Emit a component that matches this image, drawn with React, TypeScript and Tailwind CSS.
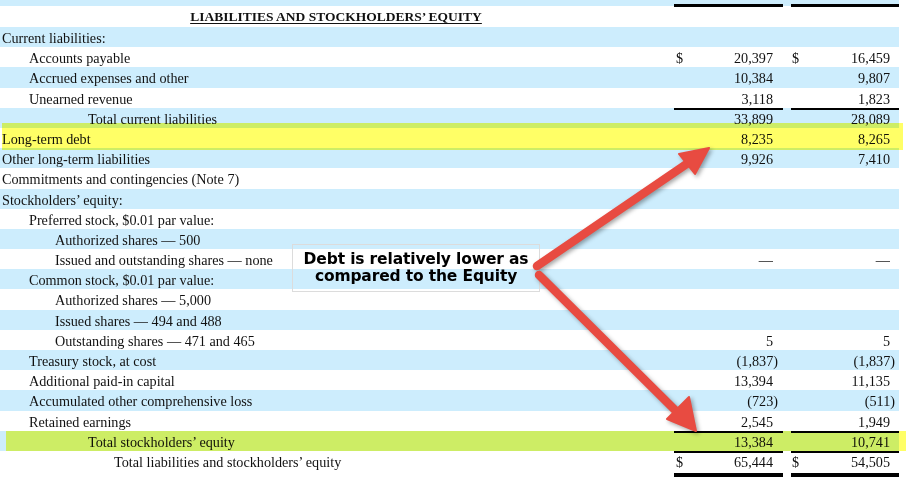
import React from 'react';

type Row = {
  label: string;
  indent: number;
  v1?: string;
  v2?: string;
  dollar?: boolean;
  blue?: boolean;
  lineTop?: boolean;
};

const rows: Row[] = [
  { label: 'Current liabilities:', indent: 2, blue: true },
  { label: 'Accounts payable', indent: 29, v1: '20,397', v2: '16,459', dollar: true },
  { label: 'Accrued expenses and other', indent: 29, v1: '10,384', v2: '9,807', blue: true },
  { label: 'Unearned revenue', indent: 29, v1: '3,118', v2: '1,823' },
  { label: 'Total current liabilities', indent: 88, v1: '33,899', v2: '28,089', blue: true, lineTop: true },
  { label: 'Long-term debt', indent: 2, v1: '8,235', v2: '8,265' },
  { label: 'Other long-term liabilities', indent: 2, v1: '9,926', v2: '7,410', blue: true },
  { label: 'Commitments and contingencies (Note 7)', indent: 2 },
  { label: 'Stockholders’ equity:', indent: 2, blue: true },
  { label: 'Preferred stock, $0.01 par value:', indent: 29 },
  { label: 'Authorized shares — 500', indent: 55, blue: true },
  { label: 'Issued and outstanding shares — none', indent: 55, v1: '—', v2: '—' },
  { label: 'Common stock, $0.01 par value:', indent: 29, blue: true },
  { label: 'Authorized shares — 5,000', indent: 55 },
  { label: 'Issued shares — 494 and 488', indent: 55, blue: true },
  { label: 'Outstanding shares — 471 and 465', indent: 55, v1: '5', v2: '5' },
  { label: 'Treasury stock, at cost', indent: 29, v1: '(1,837)', v2: '(1,837)', blue: true },
  { label: 'Additional paid-in capital', indent: 29, v1: '13,394', v2: '11,135' },
  { label: 'Accumulated other comprehensive loss', indent: 29, v1: '(723)', v2: '(511)', blue: true },
  { label: 'Retained earnings', indent: 29, v1: '2,545', v2: '1,949' },
  { label: 'Total stockholders’ equity', indent: 88, v1: '13,384', v2: '10,741', blue: true, lineTop: true },
  { label: 'Total liabilities and stockholders’ equity', indent: 114, v1: '65,444', v2: '54,505', dollar: true, lineTop: true },
];

function Num({ v }: { v?: string }) {
  if (!v) return null;
  if (v.endsWith(')')) {
    return (
      <span>
        {v.slice(0, -1)}
        <span className="mr-[-5px]">)</span>
      </span>
    );
  }
  return <span>{v}</span>;
}

function TableRow({ r }: { r: Row }) {
  // rules drawn as inset shadows so the numbers stay on the same baseline
  const line = r.lineTop ? 'shadow-[inset_0_2px_0_#000]' : '';
  return (
    <div className={`flex h-[20.2px] leading-[22px] ${r.blue ? 'bg-[#cdedfd]' : 'bg-white'}`}>
      <div className="w-[674px] whitespace-nowrap" style={{ paddingLeft: r.indent }}>
        {r.label}
      </div>
      <div className={`w-[109px] flex justify-between pl-[2px] pr-[10px] ${line}`}>
        <span>{r.dollar ? '$' : ''}</span>
        <Num v={r.v1} />
      </div>
      <div className="w-[8px]" />
      <div className={`w-[108px] flex justify-between pl-[1px] pr-[9px] ${line}`}>
        <span>{r.dollar ? '$' : ''}</span>
        <Num v={r.v2} />
      </div>
    </div>
  );
}

export default function App() {
  return (
    <div className="relative w-[915px] h-[482px] overflow-hidden bg-white text-[#111] text-[14.2px] font-['Liberation_Serif',serif]">
      <div className="w-[899px]">
        {/* top strip with column rules */}
        <div className="h-[4px] bg-[#cdedfd]" />
        <div className="flex h-[23px]">
          <div className="w-[674px] border-t-2 border-[#cdedfd] text-center">
            <span className="ml-[-2px] font-bold text-[13.5px] underline underline-offset-2 leading-[20px]">
              LIABILITIES AND STOCKHOLDERS’ EQUITY
            </span>
          </div>
          <div className="w-[109px] border-t-[3px] border-black" />
          <div className="w-[8px] border-t-2 border-[#cdedfd]" />
          <div className="w-[108px] border-t-[3px] border-black" />
        </div>

        {rows.map((r, i) => (
          <TableRow key={i} r={r} />
        ))}

        <div className="flex h-[6px]">
          <div className="w-[674px]" />
          <div className="w-[109px] border-b-[4px] border-black" />
          <div className="w-[8px]" />
          <div className="w-[108px] border-b-[4px] border-black" />
        </div>
      </div>

      {/* highlighter marks */}
      <div className="absolute left-[2px] top-[123px] w-[901px] h-[26.5px] bg-[#ffff66] mix-blend-multiply" />
      <div className="absolute left-[6px] top-[431px] w-[900px] h-[19.5px] bg-[#ffff66] mix-blend-multiply" />

      {/* callout */}
      <div className="absolute left-[292px] top-[244px] w-[248px] h-[48px] border border-[#dcdcdc] pt-[6px] text-center font-['DejaVu_Sans',sans-serif] font-bold text-[15.5px] leading-[17px] tracking-[-0.15px] text-black">
        Debt is relatively lower as
        <br />
        compared to the Equity
      </div>

      <svg
        className="absolute inset-0 pointer-events-none"
        width="915"
        height="482"
        viewBox="0 0 915 482"
        style={{ filter: 'drop-shadow(2px 2px 2px rgba(0,0,0,0.35))' }}
      >
        <g fill="#e84b41" stroke="#e84b41" strokeWidth="8.5" strokeLinecap="round" strokeLinejoin="round">
          <line x1="537" y1="266" x2="688" y2="163" />
          <polygon points="709,148 679,154 695,174" strokeWidth="2" />
          <line x1="539" y1="275" x2="676" y2="411" />
          <polygon points="696,431 667,419 689,397" strokeWidth="2" />
        </g>
      </svg>
    </div>
  );
}
